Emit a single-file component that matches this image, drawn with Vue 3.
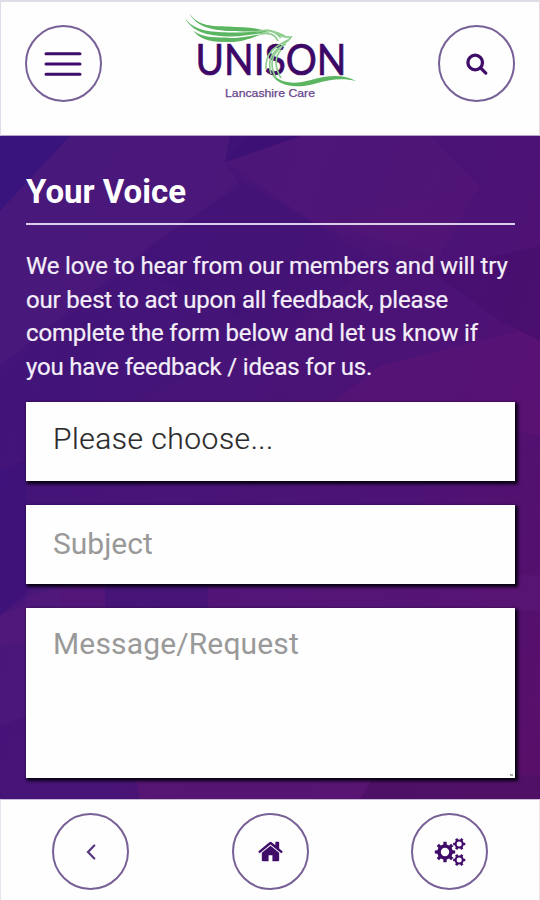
<template>
    <div class="app">
        <header class="header">
            <button class="circle-btn" aria-label="Menu">
                <svg width="40" height="26" viewBox="0 0 40 26">
                    <path d="M2 2.7h34M2 13h34M2 23.2h34" class="line menu-line" />
                </svg>
            </button>

            <svg class="logo" width="176" height="96" viewBox="0 0 176 96">
                <text class="logo-name" x="11.5" y="67" textLength="151" lengthAdjust="spacingAndGlyphs">UNISON</text>
                <text class="logo-sub" x="41" y="89" textLength="90" lengthAdjust="spacingAndGlyphs">Lancashire Care</text>
                <g class="wing">
                    <path d="M5 5.5C16 19 29 18 44 18.5C62 19.5 75 19 86 25C73 22.5 62 24 44 23C25 21.5 14 19 5 5.5z" />
                    <path d="M1 10.5C12 24 27 23.5 44 24.5C60 25 72 22 83 25C71 25.5 60 29 44 28.5C22 27.5 9 24 1 10.5z" />
                    <path d="M9 22.5C20 31 33 28.5 47 30C60 30 68 26.5 79 26.5C69 28.5 60 34 46 34C29 34 17 33 9 22.5z" />
                    <path d="M87 65C97 76 111 76.5 127 72C144 67 160 66 172 73C157 69.5 145 72 130 76C111 81 93 78 87 65z" />
                </g>
                <g class="feather">
                    <path d="M72 24Q88 19 97 30" />
                    <path d="M76 26Q90 23 94 33" />
                    <path d="M83 22Q97 25 102 29" />
                    <path d="M92 25Q100 30 107 29Q104 34 98 36" />
                    <path d="M104 32C92 38 81 44 82 61" />
                    <path d="M102 36C88 42 83 52 87 66" />
                    <path d="M98 39C86 46 86 59 92 70" />
                    <path d="M97 42C90 50 91 60 97 70" />
                </g>
            </svg>

            <button class="circle-btn" aria-label="Search">
                <svg width="24" height="24" viewBox="0 0 24 24">
                    <circle cx="10.2" cy="10.5" r="7.3" class="line search-line" />
                    <path d="M15.8 16.1l5 5" class="line search-line" />
                </svg>
            </button>
        </header>

        <main class="content">
            <svg class="facets" viewBox="0 0 540 664" preserveAspectRatio="none">
                <polygon v-for="(f, i) in facets" :key="i" :points="f.points" :fill="f.fill" :opacity="f.opacity" />
            </svg>
            <h1 class="title">Your Voice</h1>
            <p class="intro">
                <span v-for="line in intro" :key="line">{{ line }}</span>
            </p>
            <form class="form" @submit.prevent>
                <select v-model="topic" class="field field-select">
                    <option value="">Please choose...</option>
                </select>
                <input v-model="subject" class="field field-text" type="text" placeholder="Subject" />
                <div class="area-wrap">
                    <textarea v-model="message" class="field field-area" placeholder="Message/Request"></textarea>
                    <span class="grip"></span>
                </div>
            </form>
        </main>

        <footer class="footer">
            <button class="circle-btn" aria-label="Back">
                <svg width="12" height="18" viewBox="0 0 12 18">
                    <path d="M9.3 2.5L3 9l6.3 6.5" class="line back-line" />
                </svg>
            </button>
            <button class="circle-btn" aria-label="Home">
                <svg width="27" height="27" viewBox="0 0 1792 1792" fill="#3f0d69">
                    <path d="M1472 992v480q0 26-19 45t-45 19h-384v-384h-256v384h-384q-26 0-45-19t-19-45v-480q0-1 .5-3t.5-3l575-474 575 474q1 2 1 6zm223-69l-62 74q-8 9-21 11h-3q-13 0-21-7l-692-577-692 577q-12 8-24 7-13-2-21-11l-62-74q-8-10-7-23.5t11-21.5l719-599q32-26 76-26t76 26l244 204v-195q0-14 9-23t23-9h192q14 0 23 9t9 23v408l219 182q10 8 11 21.5t-7 23.5z" />
                </svg>
            </button>
            <button class="circle-btn" aria-label="Settings">
                <svg width="32" height="30" viewBox="0 0 32 30" fill="#3f0d69" fill-rule="evenodd">
                    <path v-for="(d, i) in gears" :key="i" :d="d" />
                </svg>
            </button>
        </footer>
    </div>
</template>

<script setup>
import { ref } from 'vue';

const topic = ref('');
const subject = ref('');
const message = ref('');

const intro = [
    'We love to hear from our members and will try',
    'our best to act upon all feedback, please',
    'complete the form below and let us know if',
    'you have feedback / ideas for us.'
];

const facets = [
    { points: '0,0 70,0 0,75', fill: '#2a1580', opacity: 0.4 },
    { points: '70,0 250,0 225,26 240,50 150,110 0,230 0,75', fill: '#53207f', opacity: 0.35 },
    { points: '225,26 300,0 230,0', fill: '#2d0b70', opacity: 0.4 },
    { points: '225,26 300,0 430,0 480,50 440,120 310,85', fill: '#5c1b7d', opacity: 0.25 },
    { points: '240,45 310,85 375,125 280,200 130,130', fill: '#380e72', opacity: 0.2 },
    { points: '310,85 480,50 430,135', fill: '#651a75', opacity: 0.1 },
    { points: '0,240 150,115 280,200 130,265 0,330', fill: '#3b127a', opacity: 0.2 },
    { points: '430,135 540,110 540,205 500,185', fill: '#3f0b66', opacity: 0.35 },
    { points: '335,265 380,230 520,195 540,205 540,300', fill: '#6a1878', opacity: 0.3 },
    { points: '0,480 30,460 110,440 540,440 540,475 0,510', fill: '#5b1877', opacity: 0.5 },
    { points: '105,440 208,440 208,475 105,475', fill: '#351078', opacity: 0.35 },
    { points: '0,335 26,325 26,470 0,480', fill: '#38107a', opacity: 0.5 },
    { points: '0,480 60,430 60,570 0,590', fill: '#4e1a7c', opacity: 0.5 },
    { points: '135,640 540,640 540,664 140,664', fill: '#5f1872', opacity: 0.6 },
    { points: '375,640 540,640 540,664 360,664', fill: '#480d60', opacity: 0.6 }
];

function gear(cx, cy, teeth, outer, inner, hole) {
    const step = (Math.PI * 2) / teeth;
    const point = (r, a) => `${(cx + r * Math.cos(a)).toFixed(2)} ${(cy + r * Math.sin(a)).toFixed(2)}`;
    const points = [];
    for (let i = 0; i < teeth; i++) {
        const a = i * step;
        points.push(point(inner, a - step * 0.28), point(outer, a - step * 0.2));
        points.push(point(outer, a + step * 0.2), point(inner, a + step * 0.28));
    }
    return `M${points.join('L')}Z M${cx - hole} ${cy}a${hole} ${hole} 0 1 0 ${hole * 2} 0a${hole} ${hole} 0 1 0 ${-hole * 2} 0Z`;
}

const gears = [
    gear(11, 15, 8, 10.3, 7.8, 4.2),
    gear(25.2, 7, 6, 6.2, 4.7, 2.5),
    gear(25.2, 23, 6, 6.2, 4.7, 2.5)
];
</script>

<style>
body {
    margin: 0;
    background: #fefefe;
}
</style>

<style scoped>
.app {
    width: 540px;
    height: 900px;
    display: flex;
    flex-direction: column;
    box-sizing: border-box;
    overflow: hidden;
    background: #fefefe;
    font-family: Roboto, sans-serif;
}

.header {
    height: 136px;
    flex-shrink: 0;
    box-sizing: border-box;
    display: flex;
    align-items: flex-start;
    justify-content: space-between;
    padding: 23px 24px 0;
    border: 1px solid #dfdce8;
    border-top-width: 2px;
    border-bottom-color: #b5a5c9;
}

.circle-btn {
    width: 77px;
    height: 77px;
    padding: 0;
    display: flex;
    align-items: center;
    justify-content: center;
    border: 2px solid #776095;
    border-radius: 50%;
    background: transparent;
}

.line {
    fill: none;
    stroke: #3f0d69;
    stroke-linecap: round;
}

.menu-line {
    stroke-width: 3;
}

.search-line {
    stroke-width: 3.3;
}

.back-line {
    stroke: #5b3b80;
    stroke-width: 2.3;
}

/* Logo */
.logo {
    margin-top: -17px;
    margin-left: 4px;
    overflow: visible;
}

.logo-name {
    font-family: Lato, sans-serif;
    font-size: 42px;
    font-weight: 400;
    fill: #3d0767;
    stroke: #3d0767;
    stroke-width: 0.7;
}

.logo-sub {
    font-family: "Liberation Sans", sans-serif;
    font-size: 11.5px;
    fill: #67458c;
    stroke: #67458c;
    stroke-width: 0.25;
}

.wing {
    fill: #5cb661;
}

.feather {
    fill: none;
    stroke: #8fcd90;
    stroke-width: 1.7;
}

/* Content */
.content {
    position: relative;
    height: 663px;
    flex-shrink: 0;
    box-sizing: border-box;
    padding: 33px 25px 0 26px;
    background: linear-gradient(110deg, #42147b 0%, #481477 40%, #4d1275 70%, #590f69 100%);
}

.facets {
    position: absolute;
    inset: 0;
    width: 100%;
    height: 100%;
}

.title,
.intro,
.form {
    position: relative;
}

.title {
    margin: 0;
    height: 56px;
    box-sizing: border-box;
    border-bottom: 2px solid #dccfea;
    color: #fff;
    font-size: 33px;
    font-weight: 700;
    line-height: 45px;
}

.intro {
    margin: 25px 0 0;
    color: #f4eef9;
    font-size: 24px;
    letter-spacing: -0.18px;
    line-height: 33.7px;
    white-space: nowrap;
    -webkit-text-stroke: 0.2px #f4eef9;
}

.intro span {
    display: block;
}

.form {
    margin-top: 17px;
    display: flex;
    flex-direction: column;
    gap: 24px;
}

.field {
    display: block;
    width: 100%;
    height: 79px;
    box-sizing: border-box;
    margin: 0;
    padding: 0 27px;
    border: none;
    border-radius: 0;
    outline: none;
    appearance: none;
    background: #fefefe;
    box-shadow: 2px 2px 3px 1px rgba(5, 0, 15, 0.95);
    color: #2a2a2a;
    font-family: Roboto, sans-serif;
    font-size: 30px;
}

.field-select {
    padding-bottom: 5px;
    font-weight: 300;
    letter-spacing: 0.5px;
    -webkit-text-stroke: 0.2px #2a2a2a;
}

.field-text {
    padding-bottom: 2px;
}

.field::placeholder {
    color: #999;
    opacity: 1;
}

.area-wrap {
    position: relative;
}

.field-area {
    height: 170px;
    padding-top: 18px;
    letter-spacing: 0.15px;
    resize: none;
}

.grip {
    position: absolute;
    right: 2px;
    bottom: 2px;
    width: 3px;
    height: 2px;
    background: #aaa;
}

/* Footer */
.footer {
    flex: 1;
    box-sizing: border-box;
    display: flex;
    align-items: flex-start;
    justify-content: space-between;
    padding: 13px 51px 0;
    border: 1px solid #e8e5ee;
    border-top-color: #c9bdd6;
    border-bottom: none;
}
</style>
